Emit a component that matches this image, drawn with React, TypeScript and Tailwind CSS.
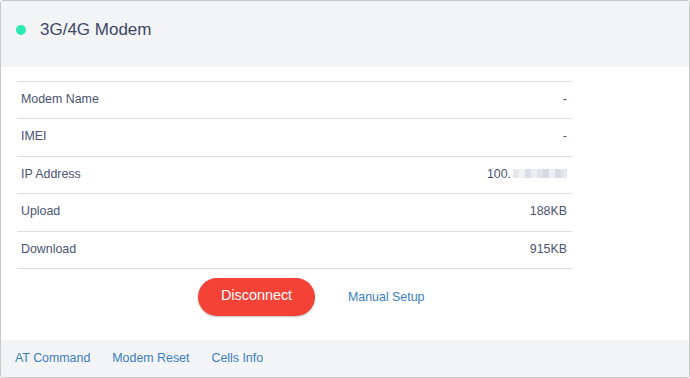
import React from "react";

const rows: { label: string; value: React.ReactNode; h: string }[] = [
  { label: "Modem Name", value: "-", h: "h-[37px]" },
  { label: "IMEI", value: "-", h: "h-[38px]" },
  { label: "IP Address", value: "ip", h: "h-[37px]" },
  { label: "Upload", value: "188KB", h: "h-[38px]" },
  { label: "Download", value: "915KB", h: "h-[37px]" },
];

function Blur() {
  const blocks = [
    "bg-[#e6e7ee]", "bg-[#f3f3f6]", "bg-[#dcdde6]", "bg-[#eeeef3]", "bg-[#e2e3ea]",
    "bg-[#d6d8e2]", "bg-[#eceef3]", "bg-[#d9dbe4]", "bg-[#e4e5ec]",
  ];
  return (
    <span className="inline-flex items-center ml-[2px] h-[10px]">
      {blocks.map((c, i) => (
        <span key={i} className={`inline-block w-[6px] h-[9px] ${c}`} />
      ))}
    </span>
  );
}

export default function App() {
  return (
    <div
      className="w-[690px] h-[378px] border border-[#c8c8c8] rounded-[3px] overflow-hidden flex flex-col bg-white"
      style={{ fontFamily: '"Liberation Sans", Arial, sans-serif' }}
    >
      <div className="h-[66px] shrink-0 bg-[#f3f4f6] flex items-start pt-[18px] pl-[15px]">
        <div className="flex items-center h-[22px]">
          <span className="w-[10px] h-[10px] rounded-full bg-[#2de9b4]" />
          <span className="ml-[14px] text-[17px] text-[#3d4768]">3G/4G Modem</span>
        </div>
      </div>
      <div className="flex-1 px-[16px] pt-[14px]">
        <div className="w-[555px] border-t border-[#dcdcdc]">
          {rows.map((r) => (
            <div
              key={r.label}
              className={`${r.h} border-b border-[#dcdcdc] flex items-center justify-between pl-[4px] pr-[5px] pb-[2px] text-[12.4px] text-[#4a5372]`}
            >
              <span>{r.label}</span>
              {r.value === "ip" ? (
                <span className="flex items-center">
                  100.
                  <Blur />
                </span>
              ) : (
                <span>{r.value}</span>
              )}
            </div>
          ))}
        </div>
        <div className="flex items-center mt-[9px] ml-[181px]">
          <button className="w-[117px] h-[38px] rounded-full bg-[#f44336] text-white text-[14.4px] pb-[2px] shadow-[0_1px_2px_rgba(0,0,0,0.25)]">
            Disconnect
          </button>
          <span className="ml-[33px] text-[12.4px] text-[#3a7ec0]">Manual Setup</span>
        </div>
      </div>
      <div className="h-[37px] shrink-0 bg-[#f3f4f6] flex items-center pl-[14px] gap-[22px] pb-[1px] text-[12.4px] text-[#3a7ec0]">
        <span>AT Command</span>
        <span>Modem Reset</span>
        <span>Cells Info</span>
      </div>
    </div>
  );
}
